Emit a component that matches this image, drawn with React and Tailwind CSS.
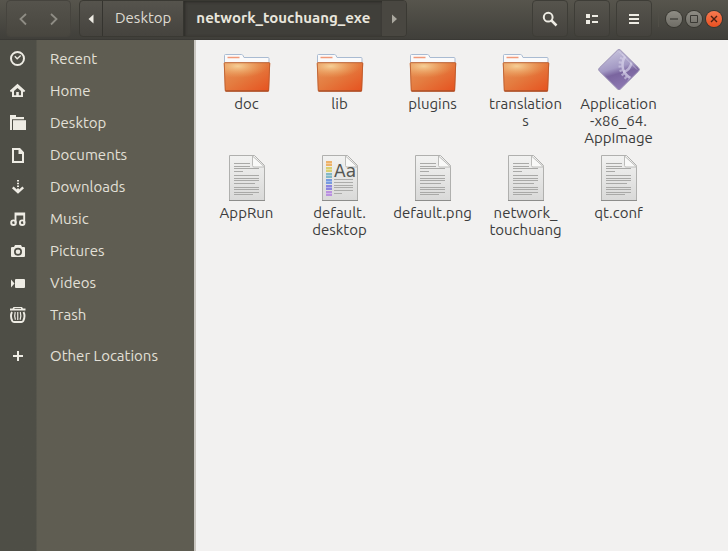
const PLACES = [
  { name: "Recent", icon: RecentIcon },
  { name: "Home", icon: HomeIcon },
  { name: "Desktop", icon: DesktopIcon },
  { name: "Documents", icon: DocumentsIcon },
  { name: "Downloads", icon: DownloadsIcon },
  { name: "Music", icon: MusicIcon },
  { name: "Pictures", icon: PicturesIcon },
  { name: "Videos", icon: VideosIcon },
  { name: "Trash", icon: TrashIcon },
];

// Line breaks mark where the label wraps under the icon.
const FILES = [
  { label: "doc", icon: FolderIcon },
  { label: "lib", icon: FolderIcon },
  { label: "plugins", icon: FolderIcon },
  { label: "translation\ns", icon: FolderIcon },
  { label: "Application\n-x86_64.\nAppImage", icon: AppImageIcon },
  { label: "AppRun", icon: TextFileIcon },
  { label: "default.\ndesktop", icon: FontFileIcon },
  { label: "default.png", icon: TextFileIcon },
  { label: "network_\ntouchuang", icon: TextFileIcon },
  { label: "qt.conf", icon: TextFileIcon },
];

function Symbol({ children }) {
  return (
    <svg
      viewBox="0 0 16 16"
      className="size-4 shrink-0"
      fill="currentColor"
      aria-hidden="true"
    >
      {children}
    </svg>
  );
}

function RecentIcon() {
  return (
    <Symbol>
      <circle cx="7.500" cy="7.500" r="6.500" fill="none" stroke="currentColor" strokeWidth="2" />
      <path d="M4.800 5.200 7.200 7.800 10.700 4.600" fill="none" stroke="currentColor" strokeWidth="1.400" />
    </Symbol>
  );
}

function HomeIcon() {
  return (
    <Symbol>
      <path d="M.4 8.400 7.500 2.200l7.100 6.200" fill="none" stroke="currentColor" strokeWidth="2" />
      <path
        fillRule="evenodd"
        d="M2 7.500 7.500 3 13 7.500V14H2zM4 8v4.200h2.200V9h2.600v3.200H11V8L7.500 5z"
      />
    </Symbol>
  );
}

function DesktopIcon() {
  return (
    <Symbol>
      <path d="M0 0h6v2h8v2.200H2V15H0z" />
      <path d="M3 5.200h13V15H3z" />
    </Symbol>
  );
}

function DocumentsIcon() {
  return (
    <Symbol>
      <path
        fillRule="evenodd"
        d="M2 1h8l4 4.200V16H2zM4 3v11h8V7H8.500V3z"
      />
    </Symbol>
  );
}

function DownloadsIcon() {
  return (
    <Symbol>
      <path d="M7 1h2v1.500H7zM7 3.800h2v1.500H7zM7 6.600h2v1.500H7zM7 9.400h2V12H7z" />
      <path d="M2.800 8.300 8 13.200l5.200-4.900" fill="none" stroke="currentColor" strokeWidth="2.400" />
    </Symbol>
  );
}

function MusicIcon() {
  return (
    <Symbol>
      <path d="M5.500 12V2.500h8.700V12" fill="none" stroke="currentColor" strokeWidth="1.900" />
      <path d="M5 2h10v2.500H5z" />
      <circle cx="3.500" cy="11.700" r="2.300" fill="none" stroke="currentColor" strokeWidth="1.900" />
      <circle cx="12.200" cy="11.700" r="2.300" fill="none" stroke="currentColor" strokeWidth="1.900" />
    </Symbol>
  );
}

function PicturesIcon() {
  return (
    <Symbol>
      <path
        fillRule="evenodd"
        d="M5 2h6l1 2h2a1 1 0 0 1 1 1v8a1 1 0 0 1-1 1H2a1 1 0 0 1-1-1V5a1 1 0 0 1 1-1h2zM8 4.800a4 4 0 1 0 0 8 4 4 0 0 0 0-8z"
      />
      <circle cx="8" cy="8.800" r="2.300" />
    </Symbol>
  );
}

function VideosIcon() {
  return (
    <Symbol>
      <rect x="5" y="4" width="10" height="9" rx="1" />
      <path d="M1 4.500 4.500 8.500 1 12.500z" />
    </Symbol>
  );
}

function TrashIcon() {
  return (
    <Symbol>
      <path d="M3.500 0h8.500l1 1.500h2.500v2H0v-2h2.500zM4.500 1.200v.8H11v-.8z" fillRule="evenodd" />
      <path
        d="M2 5c-1.600 3-1.200 6 .3 9 .4.700 1 1 1.800 1h7.300c.8 0 1.400-.300 1.800-1 1.500-3 1.900-6 .3-9"
        fill="none"
        stroke="currentColor"
        strokeWidth="1.900"
      />
      <path
        d="M5.200 5c-.900 3-.7 5 .2 7.800M7.750 5v8M10.300 5c.900 3 .7 5-.2 7.800"
        fill="none"
        stroke="currentColor"
        strokeWidth="1.200"
      />
    </Symbol>
  );
}

function PlusIcon() {
  return (
    <Symbol>
      <path d="M7 3h2v4h4v2H9v4H7V9H3V7h4z" />
    </Symbol>
  );
}

function FolderIcon() {
  return (
    <svg viewBox="0 0 48 48" className="size-12" aria-hidden="true">
      <defs>
        <linearGradient id="folder-front" x1="0" y1="0" x2="1" y2="1">
          <stop offset="0" stopColor="#e8935a" />
          <stop offset=".45" stopColor="#e47c40" />
          <stop offset="1" stopColor="#e6501e" />
        </linearGradient>
        <radialGradient id="folder-glow" cx=".3" cy=".2" r=".65">
          <stop offset="0" stopColor="#f6cf96" />
          <stop offset="1" stopColor="#eca862" stopOpacity="0" />
        </radialGradient>
      </defs>
      <path
        d="M1.500 17V9.500q0-1 1-1h16q1 0 1.500 1l1 2h24q1 0 1 1V17z"
        fill="#fbfafa"
        stroke="#a9bbd2"
        strokeWidth="1"
      />
      <path d="M4.500 11.500h12" stroke="#f19a7a" strokeWidth="1.500" />
      <path d="M.8 17.500q-.1-1 .9-1h44.600q1 0 .9 1L46 44.500q0 1-1 1H3q-1 0-1-1z" fill="url(#folder-front)" />
      <path d="M.8 17.500q-.1-1 .9-1h44.600q1 0 .9 1l-.4 10q-20 8-45.500 7z" fill="url(#folder-glow)" />
      <path
        d="M1.300 17.500q-.1-.800.700-.800h44q.800 0 .700.800L45.700 44.300q0 .800-.800.800H3q-.800 0-.800-.800z"
        fill="none"
        stroke="#b5582b"
        strokeWidth=".8"
      />
      <path d="M2.500 45h43" stroke="#a04a26" strokeWidth="1" />
    </svg>
  );
}

function Sheet({ children }) {
  return (
    <svg viewBox="0 0 48 48" className="size-12" aria-hidden="true">
      <defs>
        <linearGradient id="sheet-fill" x1="0" y1="0" x2="0" y2="1">
          <stop offset="0" stopColor="#f2f2f1" />
          <stop offset="1" stopColor="#d9d9d8" />
        </linearGradient>
      </defs>
      <path d="M6.500.5h25l10 10v35h-35z" fill="url(#sheet-fill)" stroke="#b0b0ae" strokeWidth="1" />
      <path d="M6 45.500h36" stroke="#8d8d8b" strokeWidth="1" />
      <path d="M29.500 1v9.500q0 1.500 1.500 1.500h10.500z" fill="#f9f9f8" stroke="#bcbcba" strokeWidth="1" />
      {children}
    </svg>
  );
}

function TextFileIcon() {
  return (
    <Sheet>
      <path
        d="M11 8.500h16M11 11.500h16M11 13.500h25M11 16.500h9M11 20.500h25M11 23.500h25M11 25.500h25M11 28.500h21M11 32.500h25M11 34.500h25M11 37.500h25M11 39.500h19"
        stroke="#a9a9a7"
        strokeWidth="1"
      />
    </Sheet>
  );
}

function FontFileIcon() {
  return (
    <Sheet>
      <path d="M10 6h6v5h-6z" fill="#edb26b" />
      <path d="M10 12h6v5h-6z" fill="#d9cf70" />
      <path d="M10 18h6v5h-6z" fill="#83b9c6" />
      <path d="M10 24h6v5h-6z" fill="#779be0" />
      <path d="M10 30h6v5h-6z" fill="#8c85df" />
      <path d="M10 36h6v5h-6z" fill="#ba91df" />
      <path
        d="M10 8.500h6M10 14.500h6M10 20.500h6M10 26.500h6M10 32.500h6M10 38.500h6"
        stroke="#fff"
        strokeOpacity=".35"
      />
      <path
        d="M18 24.500h19M18 27.500h19M18 30.500h19M18 32.500h19M18 35.500h19M18 38.500h8"
        stroke="#acacaa"
        strokeWidth="1"
      />
      <text x="18" y="22" fontSize="17" fill="#555753" className="font-['DejaVu_Sans',sans-serif]">
        Aa
      </text>
    </Sheet>
  );
}

function AppImageIcon() {
  return (
    <svg viewBox="0 0 48 48" className="size-12" aria-hidden="true">
      <defs>
        <linearGradient id="diamond-fill" x1=".3" y1="0" x2=".6" y2="1">
          <stop offset="0" stopColor="#c9c6de" />
          <stop offset=".45" stopColor="#a399c4" />
          <stop offset=".6" stopColor="#7a659f" />
          <stop offset="1" stopColor="#8f7ab4" />
        </linearGradient>
        <clipPath id="diamond-clip">
          <path d="M24 4 43.500 23.500 24 43.500 4.500 23.500z" />
        </clipPath>
      </defs>
      <path
        d="M22.500 4.200q1.500-1.400 3 0L43.700 22q1.500 1.500 0 3L25.500 43q-1.500 1.400-3 0L4.300 25q-1.500-1.500 0-3z"
        fill="url(#diamond-fill)"
        stroke="#9a90b4"
        strokeWidth="1"
      />
      <g clipPath="url(#diamond-clip)" fill="none" stroke="#d6d0e8">
        <circle cx="42" cy="19" r="17" strokeWidth="3" strokeDasharray="2.200 2" opacity=".6" />
        <circle cx="42" cy="19" r="14.500" strokeWidth="2.500" opacity=".75" />
        <path d="M28 26q7-1 9-11" strokeWidth="2.500" opacity=".7" />
      </g>
      <path d="M24 5.500 42 23.500" stroke="#e4e1f0" strokeWidth="1" opacity=".5" />
    </svg>
  );
}

function ToolButton({ label, children }) {
  return (
    <button
      type="button"
      aria-label={label}
      className="flex h-[37px] w-9 items-center justify-center rounded border border-[#3e3d37] bg-linear-to-b from-[#56544d] to-[#45433e] text-[#eeece4]"
    >
      {children}
    </button>
  );
}

function HeaderBar() {
  return (
    <header className="flex h-10 shrink-0 items-start justify-between border-b border-[#3a3935] bg-linear-to-b from-[#57554d] to-[#403f3a] px-1.5 text-[15px] text-[#dfdbd2]">
      <div className="flex gap-2">
        <div className="flex h-[37px] w-[65px] rounded border border-[#46443e] bg-linear-to-b from-[#55534c] to-[#48463f] text-[#8f8d85]">
          <button type="button" aria-label="Back" className="flex flex-1 items-center justify-center">
            <Symbol>
              <path d="M11 3 5.500 8l5.500 5.500" fill="none" stroke="currentColor" strokeWidth="1.800" />
            </Symbol>
          </button>
          <button type="button" aria-label="Forward" className="flex flex-1 items-center justify-center">
            <Symbol>
              <path d="m5 3 5.500 5L5 13.500" fill="none" stroke="currentColor" strokeWidth="1.800" />
            </Symbol>
          </button>
        </div>

        <nav
          aria-label="Path"
          className="flex h-[37px] overflow-hidden rounded border border-[#3a3933] bg-linear-to-b from-[#56544d] to-[#45433e]"
        >
          <button
            type="button"
            aria-label="Scroll path left"
            className="flex w-[23px] items-center justify-center border-r border-[#35342f] text-[#eeece4]"
          >
            <Symbol>
              <path d="M10.500 3.500v9L5.500 8z" />
            </Symbol>
          </button>
          <button type="button" className="border-r border-[#35342f] px-3">
            Desktop
          </button>
          <button
            type="button"
            aria-current="page"
            className="bg-[#403f3a] px-3 font-bold text-[#e9e6dd] shadow-[inset_1px_1px_3px_#2b2a26]"
          >
            network_touchuang_exe
          </button>
          <button
            type="button"
            aria-label="Scroll path right"
            className="flex w-6 items-center justify-center bg-[#494741] text-[#aaa89f]"
          >
            <Symbol>
              <path d="M6 3.500v9L11 8z" />
            </Symbol>
          </button>
        </nav>
      </div>

      <div className="flex items-center">
        <div className="flex gap-1.5">
          <ToolButton label="Search">
            <Symbol>
              <circle cx="6.200" cy="6.200" r="4.400" fill="none" stroke="currentColor" strokeWidth="2" />
              <path d="m9.500 9.500 5 5" stroke="currentColor" strokeWidth="2.500" />
            </Symbol>
          </ToolButton>
          <ToolButton label="View as list">
            <Symbol>
              <path d="M2 3h4v4H2zM2 9h4v4H2zM8 4h6v2H8zM8 10h6v2H8z" />
            </Symbol>
          </ToolButton>
          <ToolButton label="Menu">
            <Symbol>
              <path d="M3 3h10v2H3zM3 7h10v2H3zM3 11h10v2H3z" />
            </Symbol>
          </ToolButton>
        </div>

        <div className="ml-1.5 flex items-center gap-1 border-l border-[#504e47] pl-[7px]">
          <button
            type="button"
            aria-label="Minimize"
            className="size-4 rounded-full bg-linear-to-b from-[#8f8d85] to-[#6f6d66] text-[#3a3934] ring-1 ring-[#383731]"
          >
            <Symbol>
              <path d="M4 8h8" stroke="currentColor" strokeWidth="1.200" />
            </Symbol>
          </button>
          <button
            type="button"
            aria-label="Maximize"
            className="size-4 rounded-full bg-linear-to-b from-[#8f8d85] to-[#6f6d66] text-[#3a3934] ring-1 ring-[#383731]"
          >
            <Symbol>
              <path d="M4.500 4.500h7v7h-7z" fill="none" stroke="currentColor" />
            </Symbol>
          </button>
          <button
            type="button"
            aria-label="Close"
            className="size-4 rounded-full bg-linear-to-b from-[#f8794f] to-[#e8501f] text-[#4a2013] ring-1 ring-[#383731]"
          >
            <Symbol>
              <path d="m5 5 6 6M11 5l-6 6" stroke="currentColor" strokeWidth="1.400" />
            </Symbol>
          </button>
        </div>
      </div>
    </header>
  );
}

function Place({ name, icon: Icon }) {
  return (
    <li>
      <a href="#" className="flex h-8 items-center">
        <span className="flex w-9 shrink-0 justify-center text-[#eeece4]">
          <Icon />
        </span>
        <span className="pl-3.5">{name}</span>
      </a>
    </li>
  );
}

function Sidebar() {
  return (
    <aside className="w-49 shrink-0 border-r-2 border-[#c9c6c0] bg-linear-to-r from-[#4e4e46] from-[36px] to-[#5f5d52] to-[37px] pt-[3px] text-[15px] text-[#e3e0d8]">
      <ul>
        {PLACES.map((p) => (
          <Place key={p.name} {...p} />
        ))}
      </ul>
      <ul className="mt-[9px]">
        <Place name="Other Locations" icon={PlusIcon} />
      </ul>
    </aside>
  );
}

export default function App() {
  return (
    <div className="flex min-h-screen flex-col bg-[#f2f1f0] font-['Ubuntu','Noto_Sans',sans-serif]">
      <HeaderBar />
      <div className="flex flex-1">
        <Sidebar />
        <main className="flex-1 pt-1.5 pl-1">
          <ul className="grid grid-cols-[repeat(auto-fill,93px)] gap-y-[9px]">
            {FILES.map(({ label, icon: Icon }) => (
              <li key={label} className="flex flex-col items-center gap-px">
                <Icon />
                <span className="text-center text-[15px] leading-[17px] whitespace-pre text-[#3c3c3c]">
                  {label}
                </span>
              </li>
            ))}
          </ul>
        </main>
      </div>
    </div>
  );
}
